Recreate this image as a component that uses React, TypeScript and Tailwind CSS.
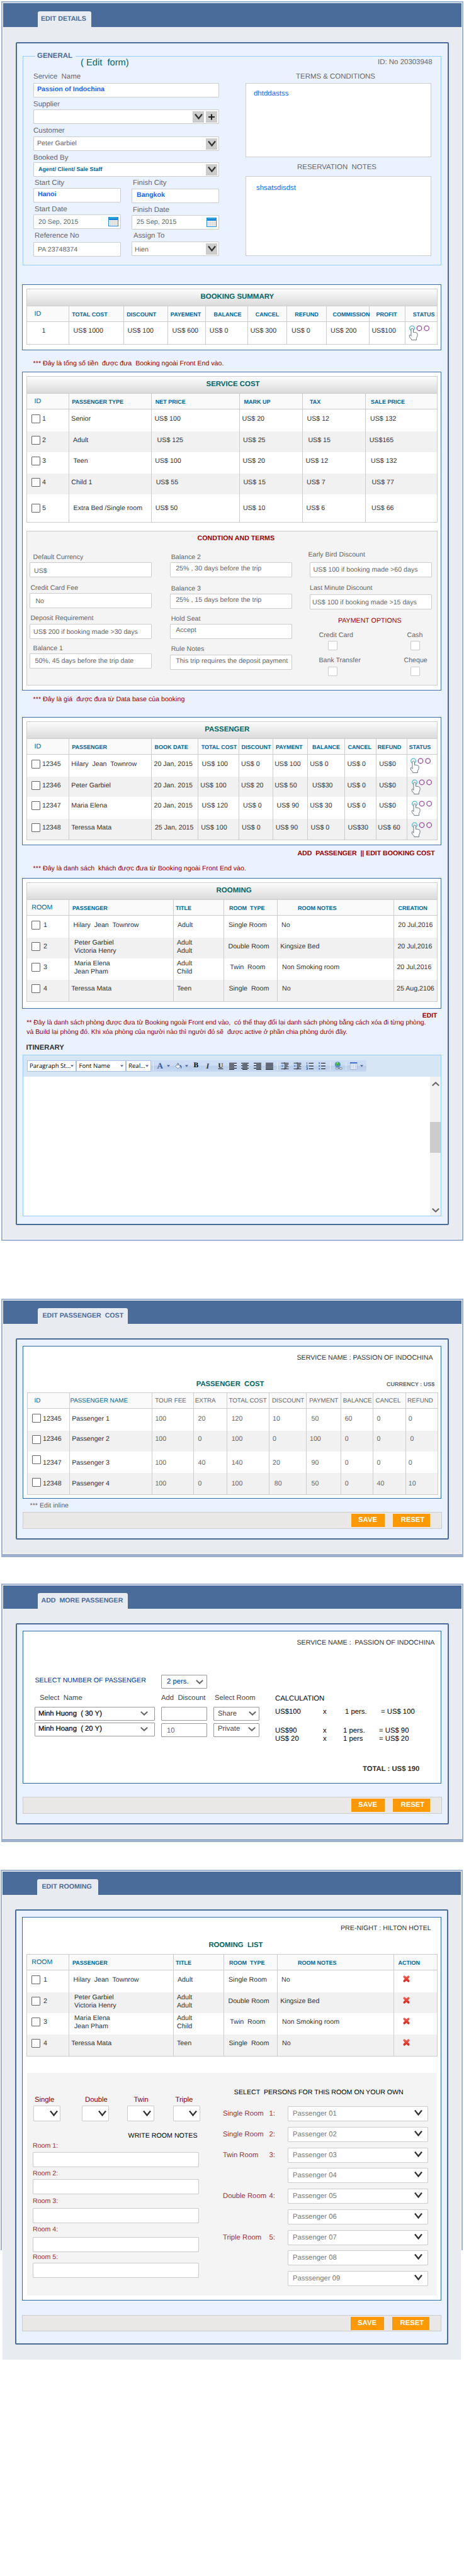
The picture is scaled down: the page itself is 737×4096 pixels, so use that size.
import React, { type ReactNode } from 'react';

type Piece = [ReactNode, string];
type RowData = { box: string; top: string; cells: Piece[] };

const VChevron = ({ cls = '' }: { cls?: string }) => (
  <svg viewBox="0 0 13 9" className={`h-[9px] w-[13px] shrink-0 ${cls}`} fill="none" stroke="#333" strokeWidth="2.4">
    <path d="M1 0.6 L6.5 7.4 L12 0.6" />
  </svg>
);

const ThinChevron = ({ cls = '' }: { cls?: string }) => (
  <svg viewBox="0 0 12 7" className={`h-[7px] w-[12px] shrink-0 ${cls}`} fill="none" stroke="#666" strokeWidth="2">
    <path d="M0.8 0.8 L6 5.6 L11.2 0.8" />
  </svg>
);

const Plus = () => (
  <svg viewBox="0 0 10 10" className="h-[10px] w-[10px]" stroke="#222" strokeWidth="2.2">
    <path d="M5 0.5 V9.5 M0 5 H10" />
  </svg>
);

const Calendar = () => (
  <svg viewBox="0 0 16 15" className="h-[15px] w-[16px] shrink-0">
    <rect x="0.5" y="0.5" width="15" height="14" fill="#f4f1ee" stroke="#1f8fe0" />
    <rect x="0" y="0" width="16" height="5" fill="#1f8fe0" />
    <path d="M2 1.5 H14" stroke="#3fc3c9" strokeWidth="0.8" />
    <path d="M3 3.7 H13.5" stroke="#0b57b0" strokeWidth="1" strokeDasharray="1 1" />
    <path d="M3.8 5.5 V14 M6.6 5.5 V14 M9.4 5.5 V14 M12.2 5.5 V14 M1 7.5 H15 M1 9.8 H15 M1 12 H15" stroke="#cfcfcf" strokeWidth="0.6" />
  </svg>
);

const Status = ({ cls }: { cls: string }) => (
  <svg viewBox="64 92 124 92" className={`h-[25px] w-[34px] ${cls}`} fill="none">
    <circle cx="84" cy="110" r="14" stroke="#4fc0cf" strokeWidth="5" />
    <circle cx="126" cy="110" r="14" stroke="#9b50a2" strokeWidth="5" />
    <circle cx="169" cy="110" r="14" stroke="#9b50a2" strokeWidth="5" />
    <path
      d="M78 150 V117 a6.5 6.5 0 0 1 13 0 V134 C101 133 112 136 115 141 C117 152 114 161 109 167 V179 H81 V174 C72 168 66 159 68 151 C72 147 76 150 78 156 Z"
      fill="#fff"
      stroke="#5c6b78"
      strokeWidth="3.4"
    />
  </svg>
);

const RedCross = () => (
  <svg viewBox="0 0 12 12" className="h-[11px] w-[11px]">
    <defs>
      <linearGradient id="redCross" x1="0" y1="0" x2="0" y2="12" gradientUnits="userSpaceOnUse">
        <stop offset="0" stopColor="#f4695a" />
        <stop offset="1" stopColor="#e11a14" />
      </linearGradient>
    </defs>
    <path d="M2.6 2.4 L9.4 9.6 M9.4 2.4 L2.6 9.6" stroke="url(#redCross)" strokeWidth="4" strokeLinecap="round" />
  </svg>
);

const Check = ({ cls = '' }: { cls?: string }) => (
  <span className={`inline-block h-[14px] w-[14px] shrink-0 rounded-[1px] border border-[#666] bg-white ${cls}`} />
);

const idCell = (n: string, gap = '', mark = ''): Piece => [
  <span className="flex items-start">
    <Check cls={mark} />
    <span className={`ml-[3px] ${gap}`}>{n}</span>
  </span>,
  'pl-[7px]',
];

const two = (a: string, b: string) => (
  <span className="-mt-[5px] block leading-[13px]">
    {a}
    <br />
    {b}
  </span>
);

function Table({ cols, title, heads, headCls, rows }: { cols: string; title?: Piece; heads: Piece[]; headCls: string; rows: RowData[] }) {
  return (
    <div className="w-[653px] border-b border-l border-[#ccc] text-[10.65px] leading-[14px] text-[#333]">
      {title && (
        <div
          className={`flex h-[27px] items-center border-t border-r border-[#ccc] bg-gradient-to-b from-[#fdfdfd] to-[#dadada] pb-[2px] text-[11.46px] font-bold text-[#006666] ${title[1]}`}
        >
          {title[0]}
        </div>
      )}
      <div className={`grid h-[25px] border-t border-[#ccc] bg-[#fafafa] ${cols}`}>
        {heads.map(([t, c], i) => (
          <div key={i} className={`flex items-center border-r border-[#ccc] pt-px text-[#006699] ${headCls} ${c}`}>
            {t}
          </div>
        ))}
      </div>
      {rows.map((r, i) => (
        <div key={i} className={`grid ${cols} ${r.box} ${i === 0 ? 'border-t border-[#ccc]' : ''} ${i % 2 ? 'bg-[#f1f1f1]' : 'bg-white'}`}>
          {r.cells.map(([t, c], j) => (
            <div key={j} className={`border-r border-[#ccc] ${r.top} ${c}`}>
              {t}
            </div>
          ))}
        </div>
      ))}
    </div>
  );
}

const BOLD_HEAD = 'text-[9.01px] font-bold';
const BIG = 'text-[10.65px] font-normal pb-px';

function Panel({ tab, tabCls, cls, headCls = 'h-[37px]', bodyCls, children }: { tab: string; tabCls: string; cls: string; headCls?: string; bodyCls: string; children: ReactNode }) {
  return (
    <section className={`w-[734px] shrink-0 px-[2px] pt-[2px] ${cls}`}>
      <div className="bg-white px-px pt-px pb-px">
        <div className={`flex items-end bg-[#4a6c9b] pl-[55px] ${headCls}`}>
          <div className={`flex h-[25px] items-center rounded-t-[3px] bg-[#e8ebf0] text-[10.65px] font-bold text-[#4a6c9b] ${tabCls}`}>{tab}</div>
        </div>
        <div className={`bg-[#e8ebf0] px-[20px] ${bodyCls}`}>{children}</div>
      </div>
    </section>
  );
}

const Frame = ({ cls, children }: { cls: string; children: ReactNode }) => (
  <div className={`w-[688px] rounded-[2px] border-2 border-[#4a6c9b] bg-[#eaf1ff] ${cls}`}>{children}</div>
);

const Input = ({ cls, children }: { cls: string; children?: ReactNode }) => (
  <div className={`flex items-center rounded-[1px] border border-[#ccc] bg-white text-[10.65px] leading-[14px] text-[#666] ${cls}`}>{children}</div>
);

const Label = ({ cls, children }: { cls: string; children: ReactNode }) => (
  <div className={`text-[11.46px] leading-[14px] text-[#666] ${cls}`}>{children}</div>
);

const GreyButton = ({ children }: { children: ReactNode }) => (
  <span className="flex h-[18px] w-[18px] items-center justify-center bg-[#ccc]">{children}</span>
);

const Note = ({ cls, children }: { cls: string; children: ReactNode }) => (
  <div className={`text-[10.65px] leading-[14px] text-[#990000] ${cls}`}>{children}</div>
);

const ButtonBar = ({ cls }: { cls: string }) => (
  <div className={`flex w-[666px] items-center border border-[#ccc] bg-[#e9e8e6] pl-[520.5px] text-[11.3px] font-bold text-white ${cls}`}>
    <span className="flex h-[21px] w-[53px] items-center justify-center bg-[#ff9900]">SAVE</span>
    <span className="ml-[13px] flex h-[21px] w-[59px] items-center bg-[#ff9900] pl-[13px]">RESET</span>
  </div>
);

/* ------------------------------ General form ------------------------------ */

function GeneralForm() {
  return (
    <fieldset className="mt-[13px] ml-[9px] h-[340px] w-[665px] border border-[#99ccff]">
      <legend className="ml-[19px] h-[14px] w-[64px] pl-[3px] text-[11.46px] leading-[14px] font-bold text-[#4a6c9b]">GENERAL</legend>
      <div className="-mt-[6px] flex h-[18px] items-center pt-[2px]">
        <span className="w-[472px] pl-[91px] text-[14.7px] text-[#006666]">( Edit  form)</span>
        <span className="pl-[91px] text-[11.46px] text-[#666]">ID: No 20303948</span>
      </div>
      <div className="flex">
        <div className="w-[353px] pl-[16px]">
          <Label cls="h-[24px] pt-[7px]">Service  Name</Label>
          <Input cls="h-[23px] w-[295px] pb-[3px] pl-[5px] font-bold text-[#1166ff]">Passion of Indochina</Input>
          <Label cls="h-[19px] pt-[4px]">Supplier</Label>
          <Input cls="h-[23px] w-[295px] justify-end gap-[3px] pr-[2px]">
            <GreyButton><VChevron /></GreyButton>
            <GreyButton><Plus /></GreyButton>
          </Input>
          <Label cls="h-[20px] pt-[4px]">Customer</Label>
          <Input cls="h-[23px] w-[295px] justify-between pr-[2px] pl-[5px]">
            <span className="-mt-px">Peter Garbiel</span>
            <GreyButton><VChevron /></GreyButton>
          </Input>
          <Label cls="h-[18px] pt-[4px]">Booked By</Label>
          <Input cls="h-[23px] w-[295px] justify-between pr-[2px] pl-[7px]">
            <span className="-mt-[2px] text-[9.01px] font-bold text-[#006699]">Agent/ Client/ Sale Staff</span>
            <GreyButton><VChevron /></GreyButton>
          </Input>
          <div className="flex">
            <div className="w-[156px]">
              <Label cls="h-[18px] pt-[3px] pl-[2px]">Start City</Label>
              <Input cls="h-[23px] w-[139px] pb-[3px] pl-[6px] font-bold text-[#1166ff]">Hanoi</Input>
              <Label cls="h-[19px] pt-[4px] pl-[2px]">Start Date</Label>
              <Input cls="h-[23px] w-[139px] justify-between pr-[3px] pl-[7px]">
                20 Sep, 2015
                <Calendar />
              </Input>
              <Label cls="h-[21px] pt-[4px] pl-[2px]">Reference No</Label>
              <Input cls="h-[23px] w-[139px] pl-[6px]">PA 23748374</Input>
            </div>
            <div className="w-[139px]">
              <Label cls="h-[19px] pt-[3px] pl-[2px]">Finish City</Label>
              <Input cls="h-[23px] w-[139px] pb-[4px] pl-[7px] font-bold text-[#1166ff]">Bangkok</Input>
              <Label cls="h-[19px] pt-[4px] pl-[2px]">Finish Date</Label>
              <Input cls="h-[23px] w-[139px] justify-between pr-[3px] pl-[7px]">
                <span className="-mt-px">25 Sep, 2015</span>
                <Calendar />
              </Input>
              <Label cls="h-[19px] pt-[3px] pl-[3px]">Assign To</Label>
              <Input cls="h-[23px] w-[139px] justify-between pr-[2px] pl-[4px]">
                <span className="mt-[2px]">Hien</span>
                <GreyButton><VChevron /></GreyButton>
              </Input>
            </div>
          </div>
        </div>
        <div>
          <Label cls="h-[24px] pt-[7px] pl-[80px]">TERMS &amp; CONDITIONS</Label>
          <div className="h-[118px] w-[295px] border border-[#ccc] bg-white pt-[9px] pl-[12px] text-[11.46px] leading-[14px] text-[#1166ff]">dhtddastss</div>
          <Label cls="h-[30px] pt-[9px] pl-[82px]">RESERVATION  NOTES</Label>
          <div className="h-[127px] w-[295px] border border-[#ccc] bg-white pt-[11px] pl-[16px] text-[11.46px] leading-[14px] text-[#1166ff]">shsatsdisdst</div>
        </div>
      </div>
    </fieldset>
  );
}

/* --------------------------- Conditions and terms ------------------------- */

const CField = ({ label, lc, value, vc }: { label: string; lc: string; value: string; vc: string }) => (
  <>
    <div className={lc}>{label}</div>
    <div className={`h-[24px] w-[194px] rounded-[1px] border border-[#ccc] bg-white ${vc}`}>{value}</div>
  </>
);

const PayBox = () => <span className="block h-[15px] w-[15px] rounded-[1px] border border-[#ccc] bg-white" />;

function Conditions() {
  return (
    <div className="mt-[13px] h-[246px] w-[653px] border border-[#ccc] bg-[#f4f4f4] pt-[4px] text-[10.65px] leading-[14px] text-[#666]">
      <div className="pl-[270.5px] font-bold text-[#990000]">CONDTION AND TERMS</div>
      <div className="flex">
        <div className="w-[226.5px] pl-[4px]">
          <CField label="Default Currency" lc="pl-[5.6px] mt-[16px]" value="US$" vc="mt-px pl-[6px] pt-[6px]" />
          <CField label="Credit Card Fee" lc="pl-[1.4px] mt-[10px]" value="No" vc="mt-px pl-[8.4px] pt-[5px]" />
          <CField label="Deposit Requirement" lc="pl-[1.4px] mt-[8.5px]" value="US$ 200 if booking made >30 days" vc="mt-[2px] pl-[5px] pt-[5px]" />
          <CField label="Balance 1" lc="pl-[5.6px] mt-[8.3px]" value="50%, 45 days before the trip date" vc="mt-[1.2px] pl-[7.5px] pt-[4.5px]" />
        </div>
        <div className="w-[222.5px]">
          <CField label="Balance 2" lc="pl-[2.2px] mt-[16px]" value="25% , 30 days before the trip" vc="mt-px pl-[8.7px] pt-[2px]" />
          <CField label="Balance 3" lc="pl-[2.2px] mt-[11px]" value="25% , 15 days before the trip" vc="mt-px pl-[8.7px] pt-[2px]" />
          <CField label="Hold Seat" lc="pl-[2.2px] mt-[9px]" value="Accept" vc="mt-[1.3px] pl-[8.7px] pt-[2px]" />
          <CField label="Rule Notes" lc="pl-[2.2px] mt-[9.2px]" value="This trip requires the deposit payment" vc="mt-[1.2px] pl-[8.7px] pt-[2px]" />
        </div>
        <div className="w-[194px]">
          <CField label="Early Bird Discount" lc="-ml-[2.6px] mt-[11.7px]" value="US$ 100 if booking made >60 days" vc="mt-[5.3px] pl-[4.6px] pt-[4.5px]" />
          <CField label="Last Minute Discount" lc="mt-[10px]" value="US$ 100 if booking made >15 days" vc="mt-[2.8px] pl-[3px] pt-[5.5px]" />
          <div className="mt-[11.2px] pl-[45px] text-[#990000]">PAYMENT OPTIONS</div>
          <div className="mt-[9.4px] flex">
            <span className="w-[140px] pl-[14.5px]">Credit Card</span>
            <span className="pl-[14.5px]">Cash</span>
          </div>
          <div className="mt-[1.8px] flex">
            <span className="w-[159.7px] pl-[28.5px]"><PayBox /></span>
            <PayBox />
          </div>
          <div className="mt-[8.4px] flex">
            <span className="w-[140px] pl-[14.5px]">Bank Transfer</span>
            <span className="pl-[9.5px]">Cheque</span>
          </div>
          <div className="mt-[3px] flex">
            <span className="w-[159.7px] pl-[28.5px]"><PayBox /></span>
            <PayBox />
          </div>
        </div>
      </div>
    </div>
  );
}

/* ---------------------------------- Editor -------------------------------- */

const Drop = ({ cls = '' }: { cls?: string }) => (
  <svg viewBox="0 0 5 4" className={`h-[4px] w-[5px] shrink-0 ${cls}`}>
    <path d="M0 0.5 H5 L2.5 3.5 Z" fill="#4a5f96" />
  </svg>
);

const Sep = ({ cls }: { cls: string }) => <span className={`h-[14px] w-px shrink-0 bg-[#e6f0fb] ${cls}`} />;

const Lines = ({ d, cls }: { d: string; cls: string }) => (
  <svg viewBox="0 0 14 12" className={`h-[12px] w-[14px] shrink-0 ${cls}`} stroke="#000" strokeWidth="1" fill="none">
    <path d={d} />
  </svg>
);

const Indent = ({ cls, out }: { cls: string; out?: boolean }) => (
  <svg viewBox="0 0 48 44" className={`h-[12px] w-[13px] shrink-0 ${cls}`} fill="none" stroke="#000" strokeWidth="3">
    <path d="M2 5 H46 M22 12 H46 M22 19 H40 M22 26 H46 M22 33 H34 M2 39 H46" />
    <path d="M22 0 V44" strokeDasharray="3 3" />
    <rect x="0" y="10" width="20" height="24" fill="#c3d5ee" stroke="none" />
    {out ? <path d="M18 22 H4 M10 15 L3 22 L10 29" stroke="#3c74c8" /> : <path d="M0 22 H14 M8 15 L15 22 L8 29" stroke="#3c74c8" />}
  </svg>
);

const Select = ({ cls, children }: { cls: string; children: ReactNode }) => (
  <span className={`flex h-[17.5px] shrink-0 items-center justify-between border border-[#a9c0e2] bg-white pr-[3px] pl-[3.5px] font-['Open_Sans','Noto_Sans',sans-serif] text-[9.6px] text-black ${cls}`}>
    {children}
    <Drop />
  </span>
);

function Editor() {
  return (
    <div className="mt-[4px] ml-[9px] flex h-[257px] w-[665px] flex-col border border-[#99ccff] bg-white">
      <div className="h-[34px] bg-[#d7e6f5] pt-[8px] pl-[5.5px]">
        <div className="flex h-[17.5px] w-[539px] items-center rounded-[2px] bg-[linear-gradient(#cbdcf4_45%,#bbcfea_50%,#c6d8f2)]">
          <Select cls="w-[78.5px]">Paragraph St...</Select>
          <Select cls="w-[78.5px]">Font Name</Select>
          <Select cls="w-[40.5px]">Real...</Select>
          <Sep cls="ml-[3px]" />
          <span className="ml-[5.5px] w-[9px] font-['Liberation_Serif',serif] text-[13px] font-bold text-[#3a5a9c]">A</span>
          <Drop cls="ml-[6.5px]" />
          <svg viewBox="0 0 40 36" className="ml-[7.5px] h-[10px] w-[11px] shrink-0">
            <path d="M14 6 L32 18 L18 33 L2 21 Z" fill="#f2f5fa" stroke="#5c6c8c" strokeWidth="2.5" />
            <path d="M14 18 V3 q3 -4 6 0 V14" fill="none" stroke="#5c6c8c" strokeWidth="2.5" />
            <path d="M27 12 C38 13 41 24 36 34 C33 28 34 22 28 20 Z" fill="#2f66bd" />
          </svg>
          <Drop cls="ml-[5px]" />
          <span className="ml-[9px] w-[7px] font-['Liberation_Serif',serif] text-[11.5px] font-bold text-black">B</span>
          <span className="ml-[13px] w-[7px] font-['Liberation_Serif',serif] text-[12px] font-bold italic text-[#333]">I</span>
          <span className="ml-[12px] w-[8px] font-['Liberation_Serif',serif] text-[11px] font-bold text-[#222] underline">U</span>
          <Lines cls="ml-[8px]" d="M1 1.5 H13 M1 3.5 H9 M1 5.5 H13 M1 7.5 H9 M1 9.5 H13 M1 11.5 H9" />
          <Lines cls="ml-[5.5px]" d="M1 1.5 H13 M3 3.5 H11 M1 5.5 H13 M3 7.5 H11 M1 9.5 H13 M3 11.5 H11" />
          <Lines cls="ml-[5.5px]" d="M1 1.5 H13 M5 3.5 H13 M1 5.5 H13 M5 7.5 H13 M1 9.5 H13 M5 11.5 H13" />
          <Lines cls="ml-[5.5px]" d="M1 1.5 H13 M1 3.5 H13 M1 5.5 H13 M1 7.5 H13 M1 9.5 H13 M1 11.5 H13" />
          <Sep cls="ml-[5px]" />
          <Indent cls="ml-[5px]" />
          <Indent cls="ml-[7px]" out />
          <svg viewBox="0 0 12 12" className="ml-[7px] h-[12px] w-[12px] shrink-0" fill="none">
            <path d="M4.5 1.5 H12 M4.5 6 H12 M4.5 10.5 H12" stroke="#000" />
            <path d="M1.5 0 V3 M0.5 4.8 H2.5 L0.8 7 H2.7 M0.5 8.8 H2.5 V11.5 H0.5 M1 10.2 H2.5" stroke="#3466c0" strokeWidth="0.9" />
          </svg>
          <svg viewBox="0 0 11 12" className="ml-[8px] h-[12px] w-[11px] shrink-0" fill="none">
            <path d="M4 1.5 H11 M4 6 H11 M4 10.5 H11" stroke="#000" />
            <path d="M0.3 1.5 H2.3 M0.3 6 H2.3 M0.3 10.5 H2.3" stroke="#3466c0" strokeWidth="2" />
          </svg>
          <Sep cls="ml-[7px]" />
          <svg viewBox="0 0 48 48" className="ml-[5.5px] h-[13px] w-[13px] shrink-0">
            <circle cx="20" cy="18" r="17" fill="#5a8fd0" />
            <path d="M10 6 C20 0 32 6 34 14 C30 20 26 16 22 24 C16 28 12 20 8 22 C4 16 6 10 10 6 Z" fill="#43b04a" />
            <path d="M17 4 C21 4 22 9 18 12 C14 12 13 7 17 4 Z" fill="#b9f0b0" />
            <rect x="8" y="34" width="18" height="10" rx="5" fill="#dfe5ee" stroke="#66758c" strokeWidth="3" />
            <rect x="28" y="35" width="18" height="10" rx="5" fill="#dfe5ee" stroke="#66758c" strokeWidth="3" />
            <path d="M20 39 H34" stroke="#66758c" strokeWidth="3" />
          </svg>
          <Sep cls="ml-[5px]" />
          <svg viewBox="0 0 42 42" className="ml-[6.5px] h-[11.5px] w-[11.5px] shrink-0">
            <rect x="1" y="1" width="39" height="40" fill="#fff" stroke="#7b93bd" strokeWidth="2" />
            <rect x="0" y="0" width="41" height="8" fill="#3f6fd0" />
            <path d="M11 8 V41 M21 8 V41 M31 8 V41 M1 16 H40 M1 25 H40 M1 33 H40" stroke="#9db2d4" strokeWidth="2" />
          </svg>
          <Drop cls="ml-[4px]" />
        </div>
      </div>
      <div className="flex flex-1 justify-end">
        <div className="flex w-[17px] flex-col items-center bg-[#f2f2f2] pt-[8px] pb-[5px]">
          <ThinChevron cls="rotate-180" />
          <div className="mt-[57px] h-[49px] w-[17px] bg-[#ccc]" />
          <ThinChevron cls="mt-auto" />
        </div>
      </div>
    </div>
  );
}

/* --------------------------------- Tables --------------------------------- */

const ROOM_COLS = 'grid-cols-[67px_166px_80px_85px_185px_69px]';

const roomHeads = (last: string): Piece[] => [
  ['ROOM', `pl-[7.3px] ${BIG}`],
  ['PASSENGER', 'pl-[5px]'],
  ['TITLE', 'pl-[3px]'],
  ['ROOM  TYPE', 'pl-[8px]'],
  ['ROOM NOTES', 'pl-[32px]'],
  [last, 'pl-[6.5px]'],
];

const roomRows = (last: Piece[]): RowData[] => [
  { box: 'h-[36px]', top: 'pt-[8px]', cells: [idCell('1', 'pl-[2px]'), ['Hilary  Jean  Townrow', 'pl-[6.6px]'], ['Adult', 'pl-[6px]'], ['Single Room', 'pl-[7px]'], ['No', 'pl-[6px]'], last[0]] },
  { box: 'h-[33px]', top: 'pt-[7px]', cells: [idCell('2', 'pl-[2px]'), [two('Peter Garbiel', 'Victoria Henry'), 'pl-[8px]'], [two('Adult', 'Adult'), 'pl-[5px]'], ['Double Room', 'pl-[6.5px]'], ['Kingsize Bed', 'pl-[4.2px]'], last[1]] },
  { box: 'h-[34px]', top: 'pt-[7px]', cells: [idCell('3', 'pl-[2px]'), [two('Maria Elena', 'Jean Pham'), 'pl-[8px]'], [two('Adult', 'Child'), 'pl-[5px]'], ['Twin  Room', 'pl-[9.3px]'], ['Non Smoking room', 'pl-[7px]'], last[2]] },
  { box: 'h-[34px]', top: 'pt-[7px]', cells: [idCell('4', 'pl-[2px]'), ['Teressa Mata', 'pl-[3.3px]'], ['Teen', 'pl-[5px]'], ['Single  Room', 'pl-[7.4px]'], ['No', 'pl-[7px]'], last[3]] },
];

const Card = ({ cls, children }: { cls: string; children: ReactNode }) => (
  <div className={`ml-[8px] w-[666px] border border-[#4470a8] bg-white pt-[6px] pl-[6px] ${cls}`}>{children}</div>
);

function EditDetails() {
  return (
    <Panel tab="EDIT DETAILS" tabCls="w-[85px] pl-[5px]" cls="mt-[2px] ml-[2px] bg-[#9db2d2] pb-[2px]" headCls="h-[38px]" bodyCls="pt-[24px] pb-[22px]">
      <Frame cls="h-[1881px]">
        <GeneralForm />
        <Card cls="mt-[30px] h-[105px]">
          <Table
            cols="grid-cols-[67px_87px_70px_60px_67px_62px_63px_68px_57px_51px]"
            title={['BOOKING SUMMARY', 'pl-[275.5px]']}
            headCls={BOLD_HEAD}
            heads={[
              ['ID', `pl-[11.5px] ${BIG}`],
              ['TOTAL COST', 'pl-[4.2px]'],
              ['DISCOUNT', 'pl-[4.2px]'],
              ['PAYEMENT', 'pl-[3.8px]'],
              ['BALANCE', 'pl-[12.4px]'],
              ['CANCEL', 'pl-[11.7px]'],
              ['REFUND', 'pl-[12.2px]'],
              ['COMMISSION', 'pl-[9.4px]'],
              ['PROFIT', 'pl-[10.5px]'],
              ['STATUS', 'pl-[11.8px]'],
            ]}
            rows={[
              {
                box: 'h-[36px]',
                top: 'pt-[7px]',
                cells: [
                  ['1', 'pl-[23.5px]'],
                  ['US$ 1000', 'pl-[6.6px]'],
                  ['US$ 100', 'pl-[5.6px]'],
                  ['US$ 600', 'pl-[6.6px]'],
                  ['US$ 0', 'pl-[5.8px]'],
                  ['US$ 300', 'pl-[3.7px]'],
                  ['US$ 0', 'pl-[7px]'],
                  ['US$ 200', 'pl-[6px]'],
                  ['US$100', 'pl-[3.4px]'],
                  [<Status cls="-mt-[2px]" />, 'pl-[4.7px]'],
                ],
              },
            ]}
          />
        </Card>
        <Note cls="h-[34px] pt-[14px] pl-[25.6px]">*** Đây là tổng số tiền  được đưa  Booking ngoài Front End vào.</Note>
        <Card cls="h-[507px]">
          <Table
            cols="grid-cols-[67px_131px_140px_100px_100px_114px]"
            title={['SERVICE COST', 'pl-[284.5px]']}
            headCls={BOLD_HEAD}
            heads={[
              ['ID', `pl-[11.5px] ${BIG}`],
              ['PASSENGER TYPE', 'pl-[4.2px]'],
              ['NET PRICE', 'pl-[5.8px]'],
              ['MARK UP', 'pl-[6.4px]'],
              ['TAX', 'pl-[11px]'],
              ['SALE PRICE', 'pl-[8px]'],
            ]}
            rows={[
              { box: 'h-[36px]', top: 'pt-[8px]', cells: [idCell('1'), ['Senior', 'pl-[3.3px]'], ['US$ 100', 'pl-[4.4px]'], ['US$ 20', 'pl-[3.5px]'], ['US$ 12', 'pl-[6.5px]'], ['US$ 132', 'pl-[7px]']] },
              { box: 'h-[33px]', top: 'pt-[7px]', cells: [idCell('2'), ['Adult', 'pl-[6px]'], ['US$ 125', 'pl-[8.6px]'], ['US$ 25', 'pl-[5px]'], ['US$ 15', 'pl-[8.4px]'], ['US$165', 'pl-[5.7px]']] },
              { box: 'h-[34px]', top: 'pt-[7px]', cells: [idCell('3'), ['Teen', 'pl-[6.6px]'], ['US$ 100', 'pl-[5.3px]'], ['US$ 20', 'pl-[4.5px]'], ['US$ 12', 'pl-[4.6px]'], ['US$ 132', 'pl-[8px]']] },
              { box: 'h-[33px]', top: 'pt-[7px]', cells: [idCell('4'), ['Child 1', 'pl-[3.3px]'], ['US$ 55', 'pl-[6.7px]'], ['US$ 15', 'pl-[5.4px]'], ['US$ 7', 'pl-[6px]'], ['US$ 77', 'pl-[9.4px]']] },
              { box: 'h-[44px]', top: 'pt-[15px]', cells: [idCell('5'), ['Extra Bed /Single room', 'pl-[6.6px]'], ['US$ 50', 'pl-[5.8px]'], ['US$ 10', 'pl-[5px]'], ['US$ 6', 'pl-[5.6px]'], ['US$ 66', 'pl-[9px]']] },
            ]}
          />
          <Conditions />
        </Card>
        <Note cls="h-[42px] pt-[7px] pl-[25.6px]">*** Đây là giá  được đưa từ Data base của booking</Note>
        <Card cls="h-[204px]">
          <Table
            cols="grid-cols-[67px_131px_74px_65px_54px_55px_59px_50px_49px_48px]"
            title={['PASSENGER', 'pl-[282.3px]']}
            headCls={BOLD_HEAD}
            heads={[
              ['ID', `pl-[11.5px] ${BIG}`],
              ['PASSENGER', 'pl-[4.2px]'],
              ['BOOK DATE', 'pl-[4.4px]'],
              ['TOTAL COST', 'pl-[4.7px]'],
              ['DISCOUNT', 'pl-[3.6px]'],
              ['PAYMENT', 'pl-[4px]'],
              ['BALANCE', 'pl-[7px]'],
              ['CANCEL', 'pl-[4.4px]'],
              ['REFUND', 'pl-[1.8px]'],
              ['STATUS', 'pl-[2.7px]'],
            ]}
            rows={[
              { box: 'h-[36px]', top: 'pt-[8px]', cells: [idCell('12345'), ['Hilary  Jean  Townrow', 'pl-[3.3px]'], ['20 Jan, 2015', 'pl-[3.5px]'], ['US$ 100', 'pl-[5.6px]'], ['US$ 0', 'pl-[3px]'], ['US$ 100', 'pl-[2.2px]'], ['US$ 0', 'pl-[3.2px]'], ['US$ 0', 'pl-[3.4px]'], ['US$0', 'pl-[4.2px]'], [<Status cls="-mt-[3px]" />, 'pl-[4px]']] },
              { box: 'h-[32px]', top: 'pt-[7px]', cells: [idCell('12346'), ['Peter Garbiel', 'pl-[3.3px]'], ['20 Jan. 2015', 'pl-[3.5px]'], ['US$ 100', 'pl-[3.3px]'], ['US$ 20', 'pl-[3px]'], ['US$ 50', 'pl-[2.2px]'], ['US$30', 'pl-[7px]'], ['US$ 0', 'pl-[3.4px]'], ['US$0', 'pl-[4.2px]'], [<Status cls="-mt-[3px]" />, 'pl-[5.5px]']] },
              { box: 'h-[35px]', top: 'pt-[7px]', cells: [idCell('12347'), ['Maria Elena', 'pl-[3.3px]'], ['20 Jan, 2015', 'pl-[3.5px]'], ['US$ 120', 'pl-[5.6px]'], ['US$ 0', 'pl-[6px]'], ['US$ 90', 'pl-[5.5px]'], ['US$ 30', 'pl-[3.2px]'], ['US$ 0', 'pl-[3.4px]'], ['US$0', 'pl-[4.2px]'], [<Status cls="-mt-px" />, 'pl-[5.5px]']] },
              { box: 'h-[33px]', top: 'pt-[7px]', cells: [idCell('12348'), ['Teressa Mata', 'pl-[3.3px]'], ['25 Jan, 2015', 'pl-[4.9px]'], ['US$ 100', 'pl-[4.2px]'], ['US$ 0', 'pl-[4px]'], ['US$ 90', 'pl-[3.7px]'], ['US$ 0', 'pl-[4.6px]'], ['US$30', 'pl-[4.4px]'], ['US$ 60', 'pl-[2.3px]'], [<Status cls="-mt-[2px]" />, 'pl-[6.3px]']] },
            ]}
          />
        </Card>
        <Note cls="mt-[6px] pl-[445.5px] font-bold tracking-[-0.06px]">ADD  PASSENGER  || EDIT BOOKING COST</Note>
        <Note cls="mt-[10px] mb-[8px] pl-[25.6px]">*** Đây là danh sách  khách được đưa từ Booking ngoài Front End vào.</Note>
        <Card cls="h-[208px]">
          <Table
            cols={ROOM_COLS}
            title={['ROOMING', 'pl-[300.6px]']}
            headCls={BOLD_HEAD}
            heads={roomHeads('CREATION')}
            rows={roomRows([
              ['20 Jul,2016', 'pl-[6.3px]'],
              ['20 Jul,2016', 'pl-[5.4px]'],
              ['20 Jul,2016', 'pl-[4.4px]'],
              ['25 Aug,2106', 'pl-[4px]'],
            ])}
          />
        </Card>
        <div className="mt-[6px] pl-[643.8px] text-[10.4px] leading-[12px] font-bold text-[#990000]">EDIT</div>
        <div className="-mt-[3px] pl-[15.3px] text-[10.42px] leading-[15px] text-[#990000]">
          ** Đây là danh sách phòng được đưa từ Booking ngoài Front end vào,  có thể thay đổi lại danh sách phòng bằng cách xóa đi từng phòng.
          <br />
          và Build lại phòng đó. Khi xóa phòng của người nào thì người đó sẽ  được active ở phần chia phòng dưới đây.
        </div>
        <div className="mt-[10px] pl-[14.4px] text-[11.3px] leading-[14px] font-bold text-[#333]">ITINERARY</div>
        <Editor />
      </Frame>
    </Panel>
  );
}

function EditPassengerCost() {
  const rest = (v: string[], pads: string[]): Piece[] => v.map((t, i) => [t, `text-[#666] ${pads[i]}`]);
  const pads = ['pl-[4.4px]', 'pl-[6.6px]', 'pl-[6.7px]', 'pl-[5px]', 'pl-[7.6px]', 'pl-[5.7px]', 'pl-[5.5px]', 'pl-[3.8px]'];
  return (
    <Panel tab="EDIT PASSENGER  COST" tabCls="w-[143px] pl-[7.5px]" cls="mt-[92px] ml-[2px] bg-[#9db0cf] pb-[5px]" bodyCls="pt-[23px] pb-[22px]">
      <Frame cls="h-[320px]">
        <div className="mt-[10px] ml-[9px] h-[243px] w-[665px] border border-[#2f6aa3] bg-white pl-[6px]">
          <div className="pt-[11px] pl-[428.5px] text-[10.65px] leading-[14px] text-[#333]">SERVICE NAME : PASSION OF INDOCHINA</div>
          <div className="mt-[28px] flex h-[14px] items-center pl-[268.7px]">
            <span className="w-[302.3px] text-[11.3px] font-bold text-[#006666]">PASSENGER  COST</span>
            <span className="pt-[2px] text-[9.01px] font-bold text-[#666]">CURRENCY : US$</span>
          </div>
          <div className="mt-[6px]">
            <Table
              cols="grid-cols-[67px_131px_66px_53px_67px_59px_55px_51px_52px_51px]"
              headCls="text-[9.83px]"
              heads={[
                ['ID', 'pl-[10.5px]'],
                ['PASSENGER NAME', 'pl-[0.4px]'],
                [<span className="text-[#666]">TOUR FEE</span>, 'pl-[4.3px]'],
                [<span className="text-[#666]">EXTRA</span>, 'pl-[1.8px]'],
                [<span className="text-[#666]">TOTAL COST</span>, 'pl-[2.4px]'],
                [<span className="text-[#666]">DISCOUNT</span>, 'pl-[4px]'],
                [<span className="text-[#666]">PAYMENT</span>, 'pl-[4.3px]'],
                [<span className="text-[#666]">BALANCE</span>, 'pl-[2.8px]'],
                [<span className="text-[#666]">CANCEL</span>, 'pl-[3.6px]'],
                [<span className="text-[#666]">REFUND</span>, 'pl-[2px]'],
              ]}
              rows={[
                { box: 'h-[36px]', top: 'pt-[9px]', cells: [idCell('12345', '', '-mt-px'), ['Passenger 1', 'pl-[3.2px]'], ...rest(['100', '20', '120', '10', '50', '60', '0', '0'], pads)] },
                { box: 'h-[33px]', top: 'pt-[6px]', cells: [idCell('12346', '', 'mt-px'), ['Passenger 2', 'pl-[3.2px]'], ...rest(['100', '0', '100', '0', '100', '0', '0', '0'], ['pl-[4.4px]', 'pl-[6.6px]', 'pl-[6.7px]', 'pl-[5px]', 'pl-[5px]', 'pl-[5.7px]', 'pl-[5.5px]', 'pl-[6.6px]'])] },
                { box: 'h-[34px]', top: 'pt-[11px]', cells: [idCell('12347', '', '-mt-[5px]'), ['Passenger 3', 'pl-[3.2px]'], ...rest(['100', '40', '140', '20', '90', '0', '0', '0'], pads)] },
                { box: 'h-[34px]', top: 'pt-[10px]', cells: [idCell('12348', '', '-mt-[2px]'), ['Passenger 4', 'pl-[3.2px]'], ...rest(['100', '0', '100', '80', '50', '0', '40', '10'], ['pl-[4.4px]', 'pl-[6.6px]', 'pl-[6.7px]', 'pl-[7.8px]', 'pl-[7.6px]', 'pl-[5.7px]', 'pl-[5.5px]', 'pl-[3.8px]'])] },
              ]}
            />
          </div>
        </div>
        <div className="h-[21px] pt-[4px] pl-[20.5px] text-[10.65px] leading-[14px] text-[#666]">*** Edit inline</div>
        <ButtonBar cls="ml-[9px] h-[27px]" />
      </Frame>
    </Panel>
  );
}

const Pick = ({ cls, children }: { cls: string; children?: ReactNode }) => (
  <div className={`flex h-[22px] items-center justify-between rounded-[1px] border border-[#999] bg-white ${cls}`}>{children}</div>
);

const CalcRow = ({ cls, a, gap, b, c }: { cls: string; a: string; gap: string; b: string; c: string }) => (
  <div className={`flex h-[14px] ${cls}`}>
    <span className="w-[76px]">{a}</span>
    <span className={gap}>x</span>
    <span className="w-[57px]">{b}</span>
    <span>{c}</span>
  </div>
);

function AddPassenger() {
  return (
    <Panel tab="ADD  MORE PASSENGER" tabCls="w-[143px] pl-[5.5px]" cls="mt-[42px] ml-[2px] bg-[#9db0cf] pb-[5px]" bodyCls="pt-[23px] pb-[22px]">
      <Frame cls="h-[320px]">
        <div className="mt-[10px] ml-[9px] h-[243px] w-[665px] border border-[#2f6aa3] bg-white pl-[18px]">
          <div className="pt-[11px] pl-[416.5px] text-[10.65px] leading-[14px] text-[#333]">SERVICE NAME :  PASSION OF INDOCHINA</div>
          <div className="mt-[44px] flex text-[#003399]">
            <span className="w-[201px] pt-[2px] pl-[0.5px] text-[10.65px] leading-[14px]">SELECT NUMBER OF PASSENGER</span>
            <Pick cls="w-[73px] pr-[5px] pl-[8px] text-[11.3px]">
              2 pers.
              <ThinChevron />
            </Pick>
          </div>
          <div className="flex text-[11.3px] leading-[14px] text-[#444]">
            <div className="w-[201px]">
              <div className="h-[29px] pt-[8px] pl-[8px]">Select  Name</div>
              <Pick cls="w-[191px] pr-[10px] pb-px pl-[5px] text-black [-webkit-text-stroke:0.2px_#000]">
                Minh Huong  ( 30 Y)
                <ThinChevron />
              </Pick>
              <Pick cls="mt-[3px] w-[191px] pr-[10px] pb-[2px] pl-[5px] text-black [-webkit-text-stroke:0.2px_#000]">
                Minh Hoang  ( 20 Y)
                <ThinChevron />
              </Pick>
            </div>
            <div className="w-[83px]">
              <div className="h-[29px] pt-[8px]">Add  Discount</div>
              <Pick cls="w-[73px]" />
              <Pick cls="mt-[4px] w-[73px] pt-px pl-[8px] text-[#666]">10</Pick>
            </div>
            <div className="w-[98px]">
              <div className="h-[29px] pt-[8px] pl-[2px]">Select Room</div>
              <Pick cls="w-[73px] pr-[4px] pb-px pl-[6px]">
                Share
                <ThinChevron />
              </Pick>
              <Pick cls="mt-[4px] w-[73px] pr-[5px] pb-[4px] pl-[6px]">
                Private
                <ThinChevron />
              </Pick>
            </div>
            <div className="text-black">
              <div className="h-[29px] pt-[9px]">CALCULATION</div>
              <CalcRow cls="mt-px" a="US$100" gap="w-[35px]" b="1 pers." c="= US$ 100" />
              <CalcRow cls="mt-[15.5px]" a="US$90" gap="w-[32px]" b="1 pers." c="= US$ 90" />
              <CalcRow cls="-mt-[0.5px]" a="US$ 20" gap="w-[32px]" b="1 pers" c="= US$ 20" />
            </div>
          </div>
          <div className="mt-[34px] pl-[521px] text-[11.3px] leading-[14px] font-bold text-[#333]">TOTAL : US$ 190</div>
        </div>
        <ButtonBar cls="mt-[21px] ml-[9px] h-[27px]" />
      </Frame>
    </Panel>
  );
}

const MiniSelect = ({ name, cls, nameCls }: { name: string; cls: string; nameCls: string }) => (
  <div className={cls}>
    <div className={`h-[16px] text-[11.3px] leading-[14px] text-[#800000] ${nameCls}`}>{name}</div>
    <div className="flex h-[24.5px] w-[43px] items-center justify-end rounded-[1px] border border-[#ccc] bg-white pr-[3.5px]">
      <VChevron />
    </div>
  </div>
);

const RoomNote = ({ n, lc, bc }: { n: string; lc: string; bc: string }) => (
  <>
    <div className={`text-[10.65px] leading-[14px] text-[#993333] ${lc}`}>{n}</div>
    <div className={`h-[24px] w-[264px] rounded-[1px] border border-[#ccc] bg-white ${bc}`} />
  </>
);

const PERSONS: [string, string, string][] = [
  ['Single Room', '1:', 'Passenger 01'],
  ['Single Room', '2:', 'Passenger 02'],
  ['Twin Room', '3:', 'Passenger 03'],
  ['', '', 'Passenger 04'],
  ['Double Room', '4:', 'Passenger 05'],
  ['', '', 'Passenger 06'],
  ['Triple Room', '5:', 'Passenger 07'],
  ['', '', 'Passenger 08'],
  ['', '', 'Passsenger 09'],
];

function EditRooming() {
  const x: Piece = [<RedCross />, 'pl-[14px]'];
  return (
    <Panel tab="EDIT ROOMING" tabCls="w-[97px] pl-[7.5px]" cls="mt-[44px] ml-[1px] bg-[linear-gradient(#9db0cf_605px,#fff_605px)]" bodyCls="pt-[23px] pb-[24px]">
      <Frame cls="h-[692px]">
        <div className="mt-[10px] ml-[9px] h-[610px] w-[666px] border border-[#2f6aa3] bg-white pl-[6px]">
          <div className="pt-[10px] pl-[499px] text-[10.65px] leading-[14px] text-[#333]">PRE-NIGHT : HILTON HOTEL</div>
          <div className="mt-[13px] pl-[289.4px] text-[11.3px] leading-[14px] font-bold text-[#006666]">ROOMING  LIST</div>
          <div className="mt-[7px]">
            <Table cols={ROOM_COLS} headCls={BOLD_HEAD} heads={roomHeads('ACTION')} rows={roomRows([x, x, x, x])} />
          </div>
          <div className="mt-[26px] ml-px flex h-[354px] w-[651px] bg-[#f4f4f4]">
            <div className="w-[311px] pt-[36px] pl-[9px]">
              <div className="flex pl-px">
                <MiniSelect name="Single" cls="w-[77px]" nameCls="pl-[2px]" />
                <MiniSelect name="Double" cls="w-[71.5px]" nameCls="pl-[5px]" />
                <MiniSelect name="Twin" cls="w-[73px]" nameCls="pl-[11px]" />
                <MiniSelect name="Triple" cls="w-[43px]" nameCls="pl-[4px]" />
              </div>
              <div className="mt-[16.5px] pl-[151.6px] text-[10.65px] leading-[14px] text-black">WRITE ROOM NOTES</div>
              <RoomNote n="Room 1:" lc="mt-[2px]" bc="mt-[3px]" />
              <RoomNote n="Room 2:" lc="mt-[3px]" bc="mt-[2px]" />
              <RoomNote n="Room 3:" lc="mt-[4px]" bc="mt-[4px]" />
              <RoomNote n="Room 4:" lc="mt-[3px]" bc="mt-[5px]" />
              <RoomNote n="Room 5:" lc="mt-px" bc="mt-[2px]" />
            </div>
            <div className="pt-[24px]">
              <div className="pl-[17.8px] text-[10.65px] leading-[14px] text-black">SELECT  PERSONS FOR THIS ROOM ON YOUR OWN</div>
              <div className="mt-[15px] flex flex-col gap-[8.77px]">
                {PERSONS.map(([room, n, who], i) => (
                  <div key={i} className="flex h-[24px] items-center text-[11.3px] leading-[14px]">
                    <span className="flex w-[103px] justify-between pr-[20px] text-[#993333]">
                      <span>{room}</span>
                      <span>{n}</span>
                    </span>
                    <span className="flex h-[24px] w-[223px] items-center justify-between rounded-[1px] border border-[#ccc] bg-white pr-[8px] pl-[7px] text-[#777]">
                      {who}
                      <VChevron cls="-mt-[3px]" />
                    </span>
                  </div>
                ))}
              </div>
            </div>
          </div>
        </div>
        <ButtonBar cls="mt-[23px] ml-[9px] h-[26px]" />
      </Frame>
    </Panel>
  );
}

export default function App() {
  return (
    <div className="flex h-[4096px] w-[737px] flex-col overflow-hidden bg-white font-['Liberation_Sans',Arial,sans-serif] whitespace-pre [text-rendering:geometricPrecision]">
      <EditDetails />
      <EditPassengerCost />
      <AddPassenger />
      <EditRooming />
    </div>
  );
}
